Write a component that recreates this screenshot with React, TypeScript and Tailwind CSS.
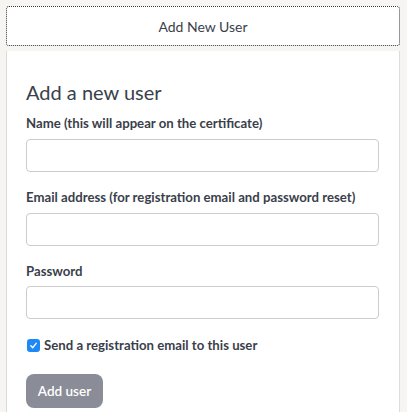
import React from "react";

export default function App() {
  return (
    <div
      className="w-[407px] h-[412px] overflow-hidden bg-[#f6f5f1] pl-[6px] pr-[7px] pt-[6px] text-[#3a3f4b]"
      style={{ fontFamily: 'Lato, "Open Sans", "Liberation Sans", sans-serif' }}
    >
      <button className="w-full h-[40px] bg-white border border-dotted border-[#333] rounded-[3px] text-[14px] text-[#3a3f4b]">
        Add New User
      </button>
      <div className="mt-[5px] bg-white border-x border-[#dcdcdc] h-[400px] pl-[19px] pr-[20px] pt-[29px]">
        <h2 className="text-[20px] leading-[24px] font-normal text-[#3a3f4b] mb-[10px]">Add a new user</h2>
        <label className="block text-[13.2px] font-bold leading-[18px] mb-[7px]">
          Name (this will appear on the certificate)
        </label>
        <input className="block w-full h-[33px] border border-[#cccccc] rounded-[4px] bg-white" />
        <label className="block text-[13.2px] font-bold leading-[18px] mt-[16px] mb-[7px]">
          Email address (for registration email and password reset)
        </label>
        <input className="block w-full h-[33px] border border-[#cccccc] rounded-[4px] bg-white" />
        <label className="block text-[13.2px] font-bold leading-[18px] mt-[16px] mb-[6px]">
          Password
        </label>
        <input type="password" className="block w-full h-[33px] border border-[#cccccc] rounded-[4px] bg-white" />
        <div className="flex items-center mt-[17px] gap-[4px]">
          <span className="w-[13px] h-[13px] rounded-[3px] bg-[#1e88f5] flex items-center justify-center ml-[1px]">
            <svg width="9" height="9" viewBox="0 0 10 10">
              <path d="M2 5.2 L4.2 7.4 L8 2.6" fill="none" stroke="white" strokeWidth="1.6" strokeLinecap="round" strokeLinejoin="round" />
            </svg>
          </span>
          <span className="text-[13.2px] font-bold leading-[18px]">Send a registration email to this user</span>
        </div>
        <button className="mt-[20px] w-[77px] h-[34px] rounded-[8px] bg-[#8a8d97] text-white text-[13.5px] font-semibold">
          Add user
        </button>
      </div>
    </div>
  );
}
